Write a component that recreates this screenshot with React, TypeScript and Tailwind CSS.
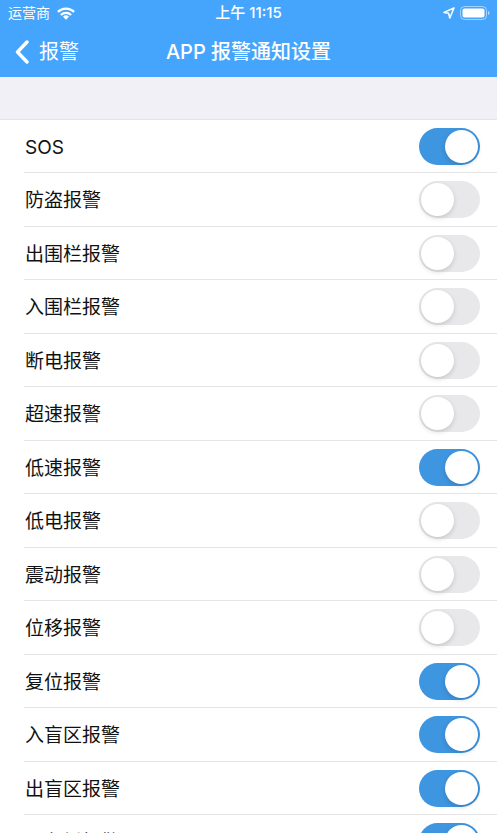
import { useState } from "react";

const initialAlarms = [
  { id: "sos", label: "SOS", on: true },
  { id: "theft", label: "防盗报警", on: false },
  { id: "fence-out", label: "出围栏报警", on: false },
  { id: "fence-in", label: "入围栏报警", on: false },
  { id: "power-cut", label: "断电报警", on: false },
  { id: "overspeed", label: "超速报警", on: false },
  { id: "low-speed", label: "低速报警", on: true },
  { id: "low-battery", label: "低电报警", on: false },
  { id: "vibration", label: "震动报警", on: false },
  { id: "move", label: "位移报警", on: false },
  { id: "reset", label: "复位报警", on: true },
  { id: "blind-in", label: "入盲区报警", on: true },
  { id: "blind-out", label: "出盲区报警", on: true },
  { id: "tamper", label: "设备拆报警", on: true },
];

function StatusBar() {
  return (
    <div className="grid grid-cols-3 items-center h-[26px] px-[7px] text-[14px] leading-5">
      <div className="flex items-center gap-[7px] pl-px">
        <span>运营商</span>
        <svg className="w-[18px] h-[13px]" viewBox="0 0 18 13" fill="none" stroke="currentColor" strokeWidth="2.3">
          <path d="M0.9 4.9a11.6 11.6 0 0 1 16.2 0" />
          <path d="M3.9 8a7.3 7.3 0 0 1 10.2 0" />
          <path d="M9 12.8 6 9.8a4.3 4.3 0 0 1 6 0z" fill="currentColor" stroke="none" />
        </svg>
      </div>
      <div className="text-center text-[15px] font-medium whitespace-nowrap">上午 11:15</div>
      <div className="flex items-center justify-end gap-[5px]">
        <svg className="w-3 h-3" viewBox="0 0 12 12" fill="none" stroke="currentColor" strokeWidth="1.5" strokeLinejoin="round">
          <path d="M11 1 1 5.4l4.6.9L6.8 11z" />
        </svg>
        <svg className="w-[30px] h-[14px]" viewBox="0 0 30 14">
          <rect x="0.5" y="0.5" width="26" height="13" rx="4" fill="none" stroke="#fff" strokeOpacity="0.5" />
          <rect x="2.5" y="2.5" width="22" height="9" rx="2" fill="#fff" />
          <path d="M28 5v4q1.5-.6 1.5-2T28 5z" fill="#fff" fillOpacity="0.6" />
        </svg>
      </div>
    </div>
  );
}

function AlarmRow({ alarm, onToggle }: any) {
  return (
    <li className="pl-6 bg-white odd:h-[53px] even:h-[54px]">
      <label
        htmlFor={alarm.id}
        className="flex items-center justify-between h-full pr-[17px] border-b border-[#e4e4e6] text-[19px] leading-6"
      >
        <span className="pl-px pt-[3px]">{alarm.label}</span>
        <span className="relative w-[61px] h-[37px]">
          <input
            id={alarm.id}
            type="checkbox"
            role="switch"
            checked={alarm.on}
            onChange={onToggle}
            className="peer block appearance-none w-full h-full rounded-full bg-[#e8e8eb] checked:bg-[#3e95e0]"
          />
          <span className="absolute left-[2px] top-[2px] w-[33px] h-[33px] rounded-full bg-white shadow-[0_2px_5px_rgba(0,0,0,0.15)] pointer-events-none peer-checked:left-[26px]" />
        </span>
      </label>
    </li>
  );
}

export default function App() {
  const [alarms, setAlarms] = useState(initialAlarms);

  const toggle = (id: string) => {
    setAlarms(alarms.map((a) => (a.id === id ? { ...a, on: !a.on } : a)));
  };

  return (
    <div className="h-screen overflow-hidden bg-[#f0f0f6] text-[#111] font-[Inter,'Noto_Sans_CJK_SC',sans-serif]">
      <header className="bg-[#45a5fc] text-white">
        <StatusBar />
        <nav className="grid grid-cols-[1fr_auto_1fr] items-center h-[51px] px-[15px]">
          <button className="flex items-center gap-[10px] text-[20px] leading-6">
            <svg className="w-[14px] h-6" viewBox="0 0 14 24" fill="none" stroke="currentColor" strokeWidth="3.4" strokeLinecap="round" strokeLinejoin="round">
              <path d="M12 2 2.5 12 12 22" />
            </svg>
            报警
          </button>
          <h1 className="text-[20px] leading-6 font-medium">APP 报警通知设置</h1>
        </nav>
      </header>

      <ul className="mt-[42px] border-t border-[#e4e4e6]">
        {alarms.map((a) => (
          <AlarmRow key={a.id} alarm={a} onToggle={() => toggle(a.id)} />
        ))}
      </ul>
    </div>
  );
}
